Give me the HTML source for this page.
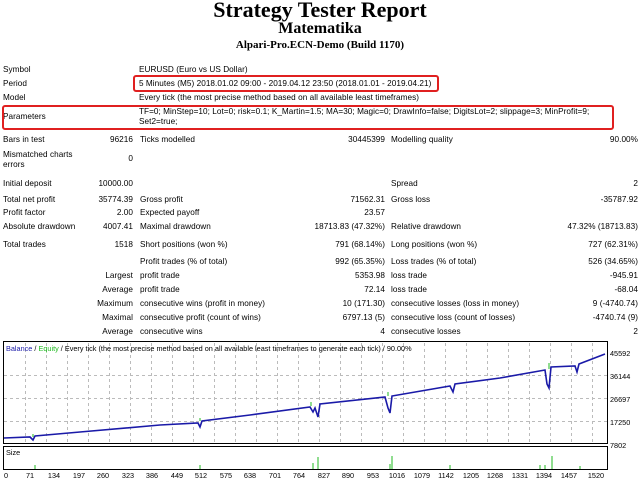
<!DOCTYPE html>
<html><head><meta charset="utf-8"><style>
body{margin:0;width:640px;height:480px;background:#fff;position:relative;overflow:hidden;font-family:"Liberation Sans",sans-serif;font-size:8.2px;letter-spacing:0.05px;color:#000}
.t{position:absolute;white-space:nowrap;line-height:10px}
.r{text-align:right}
.h{position:absolute;left:0;width:640px;text-align:center;font-family:"Liberation Serif",serif;font-weight:bold;white-space:nowrap;letter-spacing:0}
.box{position:absolute;border:2px solid #e02020;border-radius:3px}
svg text{font-family:"Liberation Sans",sans-serif;letter-spacing:0}
</style></head><body>
<div class="h" style="top:-3px;font-size:22px">Strategy Tester Report</div>
<div class="h" style="top:20px;font-size:16px">Matematika</div>
<div class="h" style="top:39px;font-size:11px">Alpari-Pro.ECN-Demo (Build 1170)</div>

<div class="t" style="left:3px;top:65px">Symbol</div><div class="t" style="left:139px;top:65px">EURUSD (Euro vs US Dollar)</div>
<div class="t" style="left:3px;top:79px">Period</div><div class="t" style="left:139px;top:79px">5 Minutes (M5) 2018.01.02 09:00 - 2019.04.12 23:50 (2018.01.01 - 2019.04.21)</div>
<div class="box" style="left:133px;top:75px;width:302px;height:13px"></div>
<div class="t" style="left:3px;top:93px">Model</div><div class="t" style="left:139px;top:93px">Every tick (the most precise method based on all available least timeframes)</div>
<div class="t" style="left:3px;top:112px">Parameters</div><div class="t" style="left:139px;top:107px">TF=0; MinStep=10; Lot=0; risk=0.1; K_Martin=1.5; MA=30; Magic=0; DrawInfo=false; DigitsLot=2; slippage=3; MinProfit=9;</div>
<div class="t" style="left:139px;top:117px">Set2=true;</div>
<div class="box" style="left:2px;top:105px;width:608px;height:21px"></div>

<div class="t" style="left:3px;top:135px">Bars in test</div><div class="t r" style="right:507px;top:135px">96216</div>
<div class="t" style="left:140px;top:135px">Ticks modelled</div><div class="t r" style="right:255px;top:135px">30445399</div>
<div class="t" style="left:391px;top:135px">Modelling quality</div><div class="t r" style="right:2px;top:135px">90.00%</div>
<div class="t" style="left:3px;top:150px">Mismatched charts</div><div class="t" style="left:3px;top:160px">errors</div><div class="t r" style="right:507px;top:154px">0</div>

<div class="t" style="left:3px;top:179px">Initial deposit</div><div class="t r" style="right:507px;top:179px">10000.00</div>
<div class="t" style="left:391px;top:179px">Spread</div><div class="t r" style="right:2px;top:179px">2</div>
<div class="t" style="left:3px;top:195px">Total net profit</div><div class="t r" style="right:507px;top:195px">35774.39</div>
<div class="t" style="left:140px;top:195px">Gross profit</div><div class="t r" style="right:255px;top:195px">71562.31</div>
<div class="t" style="left:391px;top:195px">Gross loss</div><div class="t r" style="right:2px;top:195px">-35787.92</div>
<div class="t" style="left:3px;top:208px">Profit factor</div><div class="t r" style="right:507px;top:208px">2.00</div>
<div class="t" style="left:140px;top:208px">Expected payoff</div><div class="t r" style="right:255px;top:208px">23.57</div>
<div class="t" style="left:3px;top:222px">Absolute drawdown</div><div class="t r" style="right:507px;top:222px">4007.41</div>
<div class="t" style="left:140px;top:222px">Maximal drawdown</div><div class="t r" style="right:255px;top:222px">18713.83 (47.32%)</div>
<div class="t" style="left:391px;top:222px">Relative drawdown</div><div class="t r" style="right:2px;top:222px">47.32% (18713.83)</div>

<div class="t" style="left:3px;top:240px">Total trades</div><div class="t r" style="right:507px;top:240px">1518</div>
<div class="t" style="left:140px;top:240px">Short positions (won %)</div><div class="t r" style="right:255px;top:240px">791 (68.14%)</div>
<div class="t" style="left:391px;top:240px">Long positions (won %)</div><div class="t r" style="right:2px;top:240px">727 (62.31%)</div>
<div class="t" style="left:140px;top:257px">Profit trades (% of total)</div><div class="t r" style="right:255px;top:257px">992 (65.35%)</div>
<div class="t" style="left:391px;top:257px">Loss trades (% of total)</div><div class="t r" style="right:2px;top:257px">526 (34.65%)</div>
<div class="t r" style="right:507px;top:271px">Largest</div><div class="t" style="left:140px;top:271px">profit trade</div><div class="t r" style="right:255px;top:271px">5353.98</div>
<div class="t" style="left:391px;top:271px">loss trade</div><div class="t r" style="right:2px;top:271px">-945.91</div>
<div class="t r" style="right:507px;top:285px">Average</div><div class="t" style="left:140px;top:285px">profit trade</div><div class="t r" style="right:255px;top:285px">72.14</div>
<div class="t" style="left:391px;top:285px">loss trade</div><div class="t r" style="right:2px;top:285px">-68.04</div>
<div class="t r" style="right:507px;top:299px">Maximum</div><div class="t" style="left:140px;top:299px">consecutive wins (profit in money)</div><div class="t r" style="right:255px;top:299px">10 (171.30)</div>
<div class="t" style="left:391px;top:299px">consecutive losses (loss in money)</div><div class="t r" style="right:2px;top:299px">9 (-4740.74)</div>
<div class="t r" style="right:507px;top:313px">Maximal</div><div class="t" style="left:140px;top:313px">consecutive profit (count of wins)</div><div class="t r" style="right:255px;top:313px">6797.13 (5)</div>
<div class="t" style="left:391px;top:313px">consecutive loss (count of losses)</div><div class="t r" style="right:2px;top:313px">-4740.74 (9)</div>
<div class="t r" style="right:507px;top:327px">Average</div><div class="t" style="left:140px;top:327px">consecutive wins</div><div class="t r" style="right:255px;top:327px">4</div>
<div class="t" style="left:391px;top:327px">consecutive losses</div><div class="t r" style="right:2px;top:327px">2</div>

<svg style="position:absolute;left:0;top:0" width="640" height="480">
<g stroke="#bbb" stroke-dasharray="3,3" stroke-width="1">
<line x1="4" y1="375.5" x2="607" y2="375.5"/><line x1="4" y1="398.5" x2="607" y2="398.5"/><line x1="4" y1="421.5" x2="607" y2="421.5"/>
<line x1="25.5" y1="343" x2="25.5" y2="443"/><line x1="46.5" y1="343" x2="46.5" y2="443"/><line x1="67.5" y1="343" x2="67.5" y2="443"/><line x1="88.5" y1="343" x2="88.5" y2="443"/><line x1="109.5" y1="343" x2="109.5" y2="443"/><line x1="130.5" y1="343" x2="130.5" y2="443"/><line x1="151.5" y1="343" x2="151.5" y2="443"/><line x1="172.5" y1="343" x2="172.5" y2="443"/><line x1="193.5" y1="343" x2="193.5" y2="443"/><line x1="214.5" y1="343" x2="214.5" y2="443"/><line x1="235.5" y1="343" x2="235.5" y2="443"/><line x1="256.5" y1="343" x2="256.5" y2="443"/><line x1="277.5" y1="343" x2="277.5" y2="443"/><line x1="298.5" y1="343" x2="298.5" y2="443"/><line x1="319.5" y1="343" x2="319.5" y2="443"/><line x1="340.5" y1="343" x2="340.5" y2="443"/><line x1="361.5" y1="343" x2="361.5" y2="443"/><line x1="382.5" y1="343" x2="382.5" y2="443"/><line x1="403.5" y1="343" x2="403.5" y2="443"/><line x1="424.5" y1="343" x2="424.5" y2="443"/><line x1="445.5" y1="343" x2="445.5" y2="443"/><line x1="466.5" y1="343" x2="466.5" y2="443"/><line x1="487.5" y1="343" x2="487.5" y2="443"/><line x1="508.5" y1="343" x2="508.5" y2="443"/><line x1="529.5" y1="343" x2="529.5" y2="443"/><line x1="550.5" y1="343" x2="550.5" y2="443"/><line x1="571.5" y1="343" x2="571.5" y2="443"/><line x1="592.5" y1="343" x2="592.5" y2="443"/>
</g>
<rect x="3.5" y="341.5" width="604" height="102" fill="none" stroke="#000"/>
<rect x="3.5" y="446.5" width="604" height="23" fill="none" stroke="#000"/>
<polyline fill="none" stroke="#1a1aa8" stroke-width="1.6" points="4,438 30,437 33,440 35,436 80,432 160,425 198,423 200,427 202,421 250,415 310,407 313,412 315,408 318,417 320,404 385,397 388,408 390,413 392,396 450,386 453,392 455,384 500,378 545,370 547,384 549,388 551,367 575,366 577,372 579,364 605,354"/>
<g stroke="#22bb22" stroke-width="1"><line x1="33" y1="434" x2="33" y2="437"/><line x1="200" y1="418" x2="200" y2="421"/><line x1="311" y1="402" x2="311" y2="406"/><line x1="388" y1="392" x2="388" y2="396"/><line x1="549" y1="363" x2="549" y2="369"/>
<line x1="35" y1="465" x2="35" y2="469"/><line x1="200" y1="465" x2="200" y2="469"/><line x1="313" y1="463" x2="313" y2="469"/><line x1="318" y1="457" x2="318" y2="469"/><line x1="392" y1="456" x2="392" y2="469"/><line x1="390" y1="464" x2="390" y2="469"/><line x1="552" y1="456" x2="552" y2="469"/><line x1="545" y1="465" x2="545" y2="469"/><line x1="540" y1="465" x2="540" y2="469"/><line x1="450" y1="465" x2="450" y2="469"/><line x1="580" y1="466" x2="580" y2="469"/></g>
<text x="6" y="351" font-size="7.3"><tspan fill="#1a1aa8">Balance</tspan> / <tspan fill="#22bb22">Equity</tspan> / Every tick (the most precise method based on all available least timeframes to generate each tick) / 90.00%</text>
<text x="6" y="455" font-size="7.3">Size</text>
<g font-size="7.3">
<text x="610" y="356">45592</text><text x="610" y="379">36144</text><text x="610" y="402">26697</text><text x="610" y="425">17250</text><text x="610" y="448">7802</text>
</g>
<g font-size="7.3" text-anchor="middle">
<text x="6" y="478">0</text><text x="30" y="478">71</text><text x="54" y="478">134</text><text x="79" y="478">197</text><text x="103" y="478">260</text><text x="128" y="478">323</text><text x="152" y="478">386</text><text x="177" y="478">449</text><text x="201" y="478">512</text><text x="226" y="478">575</text><text x="250" y="478">638</text><text x="275" y="478">701</text><text x="299" y="478">764</text><text x="324" y="478">827</text><text x="348" y="478">890</text><text x="373" y="478">953</text><text x="397" y="478">1016</text><text x="422" y="478">1079</text><text x="446" y="478">1142</text><text x="471" y="478">1205</text><text x="495" y="478">1268</text><text x="520" y="478">1331</text><text x="544" y="478">1394</text><text x="569" y="478">1457</text><text x="596" y="478">1520</text>
</g>
</svg>
</body></html>
